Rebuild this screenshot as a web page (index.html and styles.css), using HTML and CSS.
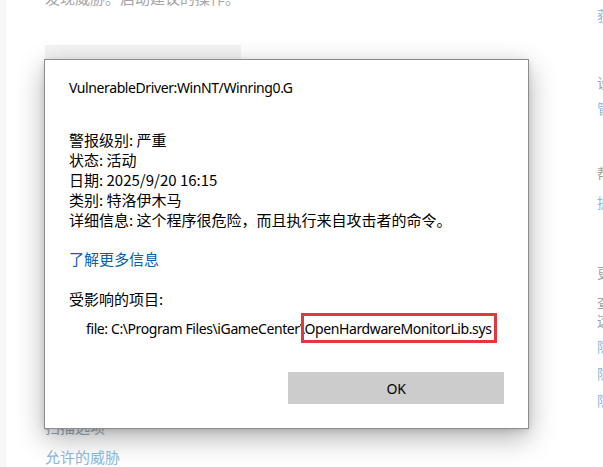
FILE: index.html
```html
<!DOCTYPE html>
<html lang="zh-CN">
<head>
<meta charset="utf-8">
<link rel="stylesheet" href="styles.css">
</head>
<body>
<div class="page">
  <div class="leftbar"></div>
  <div class="main">
    <p class="intro">发现威胁。启动建议的操作。</p>
    <div class="ghost-btn"></div>
    <div class="spacer"></div>
    <p class="bg-link dim">扫描选项</p>
    <p class="bg-link">允许的威胁</p>
  </div>
  <div class="side">
    <span class="s-link s1">获</span>
    <span class="s-gray s2">设</span>
    <span class="s-link s3">管</span>
    <span class="s-gray s4">帮</span>
    <span class="s-link s5">提</span>
    <span class="s-gray s6">更</span>
    <span class="s-gray s7">查</span>
    <span class="s-gray s8">这</span>
    <span class="s-link s9">隐</span>
    <span class="s-link s10">隐</span>
    <span class="s-link s10">隐</span>
  </div>

  <div class="dialog">
    <p class="title en">VulnerableDriver:WinNT/Winring0.G</p>
    <div class="details">
      <p>警报级别: 严重</p>
      <p>状态: 活动</p>
      <p>日期: 2025/9/20 16:15</p>
      <p>类别: 特洛伊木马</p>
      <p>详细信息: 这个程序很危险，而且执行来自攻击者的命令。</p>
    </div>
    <p class="more">了解更多信息</p>
    <p class="affected">受影响的项目:</p>
    <p class="file en">file: C:\Program Files\iGameCenter\<span class="mark">OpenHardwareMonitorLib.sys</span></p>
    <div class="actions">
      <button class="ok en">OK</button>
    </div>
  </div>
</div>
</body>
</html>
```

FILE: styles.css
```css
* { box-sizing: border-box; }
html, body { margin: 0; padding: 0; }
body {
  width: 603px;
  height: 467px;
  overflow: hidden;
  background: #ffffff;
  font-family: "Noto Sans CJK SC", sans-serif;
  color: #000;
}
p { margin: 0; }
.page {
  position: relative;
  width: 603px;
  height: 467px;
  display: flex;
}
.leftbar {
  width: 6px;
  background: #f7f7f7;
  flex: none;
}
.main {
  width: 540px;
  flex: none;
  padding-left: 39px;
  display: flex;
  flex-direction: column;
}
.intro {
  margin-top: -12px;
  font-size: 15px;
  line-height: 20px;
  color: #a6a6a6;
}
.ghost-btn {
  margin-top: 37px;
  width: 196px;
  height: 30px;
  background: #f3f3f3;
}
.spacer { flex: 1; }
.bg-link {
  font-size: 15px;
  line-height: 20px;
  color: #8db9df;
}
.bg-link.dim { color: #9aa9b8; margin-bottom: 10px; }
.side {
  padding-left: 51px;
  display: flex;
  flex-direction: column;
  font-size: 14px;
  line-height: 14px;
  white-space: nowrap;
}
.side span { display: block; }
.s-link { color: #8db9df; }
.s-gray { color: #a0a0a0; }
.s1 { margin-top: 8px; }
.s2 { margin-top: 53px; }
.s3 { margin-top: 12px; }
.s4 { margin-top: 51px; }
.s5 { margin-top: 15px; }
.s6 { margin-top: 56px; }
.s7 { margin-top: 16px; }
.s8 { margin-top: 4px; }
.s9 { margin-top: 12px; }
.s10 { margin-top: 13px; }

.dialog {
  position: absolute;
  left: 44px;
  top: 59px;
  width: 485px;
  height: 370px;
  background: #fff;
  border: 1px solid #8c8c8c;
  box-shadow: 0 9px 26px rgba(0,0,0,0.3), 0 2px 6px rgba(0,0,0,0.12);
  padding: 18px 0 0 24px;
  font-size: 15px;
  line-height: 20px;
}
.en {
  font-family: "Noto Sans", sans-serif;
  font-size: 14px;
  letter-spacing: -0.4px;
}
.title { margin-bottom: 32px; line-height: 20px; }
.more { margin-top: 19px; color: #0063b1; }
.affected { margin-top: 20px; }
.file { margin-top: 10px; padding-left: 17px; white-space: nowrap; line-height: 20px; }
.mark { position: relative; }
.mark::after {
  content: "";
  position: absolute;
  left: -4px;
  right: -6px;
  top: -6px;
  bottom: -5px;
  border: 3px solid #e2373c;
}
.actions {
  margin-top: 33px;
  display: flex;
  justify-content: flex-end;
  padding-right: 24px;
}
.ok {
  width: 216px;
  height: 32px;
  border: none;
  background: #cccccc;
  color: #000;
  padding: 0;
}
```
